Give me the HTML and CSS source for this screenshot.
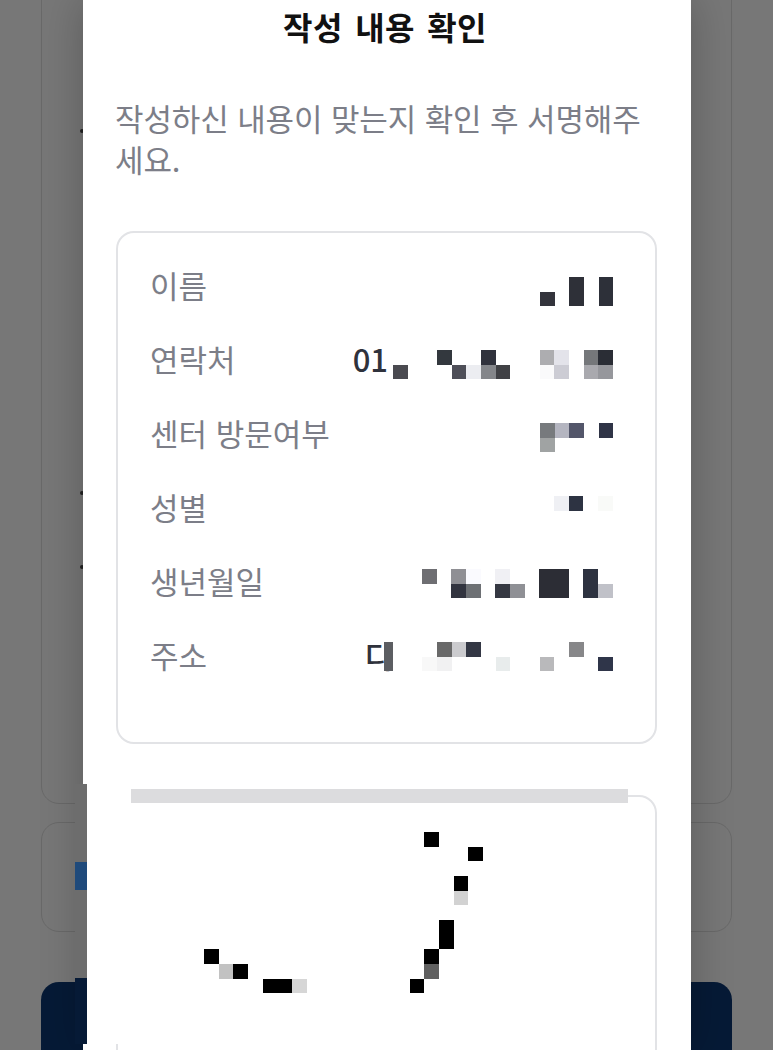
FILE: index.html
```html
<!DOCTYPE html>
<html lang="ko">
<head>
<meta charset="utf-8">
<title>작성 내용 확인</title>
<link rel="stylesheet" href="styles.css">
</head>
<body>
<div class="page">
  <div class="backdrop">
    <div class="bg-card bg-card-form"></div>
    <div class="bg-card bg-card-agree"></div>
    <div class="bg-button"></div>
  </div>
  <i class="bullet bullet-a"></i>
  <i class="bullet bullet-b"></i>
  <i class="bullet bullet-c"></i>

  <section class="modal">
    <h1 class="title">작성 내용 확인</h1>
    <p class="desc">작성하신 내용이 맞는지 확인 후 서명해주세요.</p>
    <div class="info-card">
      <div class="row row-1">
        <span class="label">이름</span>
        <svg class="mosaic" width="73.3" height="29.3" viewBox="0 0 5 2" shape-rendering="crispEdges">
          <rect x="0" y="1" width="1" height="1" fill="#33343c"/>
          <rect x="2" y="0" width="1" height="2" fill="#2e3038"/>
          <rect x="4" y="0" width="1" height="2" fill="#2d3039"/>
        </svg>
      </div>
      <div class="row row-2">
        <span class="label">연락처</span>
        <span class="value-text">01</span>
        <svg class="mosaic" width="220" height="29.3" viewBox="0 0 15 2" shape-rendering="crispEdges">
          <rect x="3" y="0" width="1" height="1" fill="#33383e"/>
          <rect x="6" y="0" width="1" height="1" fill="#30323c"/>
          <rect x="10" y="0" width="1" height="1" fill="#adadb0"/>
          <rect x="11" y="0" width="1" height="1" fill="#e3e3ea"/>
          <rect x="13" y="0" width="1" height="1" fill="#75777a"/>
          <rect x="14" y="0" width="1" height="1" fill="#2a2d35"/>
          <rect x="0" y="1" width="1" height="1" fill="#4a4a50"/>
          <rect x="4" y="1" width="1" height="1" fill="#4e4f58"/>
          <rect x="5" y="1" width="1" height="1" fill="#ecedf1"/>
          <rect x="6" y="1" width="1" height="1" fill="#84868a"/>
          <rect x="7" y="1" width="1" height="1" fill="#404145"/>
          <rect x="10" y="1" width="1" height="1" fill="#fafafb"/>
          <rect x="11" y="1" width="1" height="1" fill="#ccccd4"/>
          <rect x="13" y="1" width="1" height="1" fill="#a9a9ae"/>
          <rect x="14" y="1" width="1" height="1" fill="#96979c"/>
        </svg>
      </div>
      <div class="row row-3">
        <span class="label">센터 방문여부</span>
        <svg class="mosaic" width="73.3" height="29.3" viewBox="0 0 5 2" shape-rendering="crispEdges">
          <rect x="0" y="0" width="1" height="1" fill="#777a7d"/>
          <rect x="1" y="0" width="1" height="1" fill="#b4b5c0"/>
          <rect x="2" y="0" width="1" height="1" fill="#53566a"/>
          <rect x="4" y="0" width="1" height="1" fill="#2f3446"/>
          <rect x="0" y="1" width="1" height="1" fill="#a0a3a3"/>
        </svg>
      </div>
      <div class="row row-4">
        <span class="label">성별</span>
        <svg class="mosaic" width="58.7" height="29.3" viewBox="0 0 4 2" shape-rendering="crispEdges">
          <rect x="0" y="0" width="1" height="1" fill="#eff0f4"/>
          <rect x="1" y="0" width="1" height="1" fill="#2d3342"/>
          <rect x="3" y="0" width="1" height="1" fill="#f9faf8"/>
        </svg>
      </div>
      <div class="row row-5">
        <span class="label">생년월일</span>
        <svg class="mosaic" width="190.7" height="29.3" viewBox="0 0 13 2" shape-rendering="crispEdges">
          <rect x="0" y="0" width="1" height="1" fill="#6e6e72"/>
          <rect x="2" y="0" width="1" height="1" fill="#8f8f94"/>
          <rect x="3" y="0" width="1" height="1" fill="#fafafe"/>
          <rect x="5" y="0" width="1" height="1" fill="#f0f0f4"/>
          <rect x="8" y="0" width="2" height="2" fill="#2c2d35"/>
          <rect x="11" y="0" width="1" height="2" fill="#2d3240"/>
          <rect x="2" y="1" width="1" height="1" fill="#32343f"/>
          <rect x="3" y="1" width="1" height="1" fill="#6d7074"/>
          <rect x="5" y="1" width="1" height="1" fill="#353842"/>
          <rect x="6" y="1" width="1" height="1" fill="#8f9095"/>
          <rect x="12" y="1" width="1" height="1" fill="#c0c1c8"/>
        </svg>
      </div>
      <div class="row row-6">
        <span class="label">주소</span>
        <span class="value-text value-clip">디</span>
        <svg class="mosaic" width="220" height="29.3" viewBox="0 0 15 2" shape-rendering="crispEdges">
          <rect x="3" y="0" width="1" height="1" fill="#696969"/>
          <rect x="4" y="0" width="1" height="1" fill="#cbcbce"/>
          <rect x="5" y="0" width="1" height="1" fill="#333744"/>
          <rect x="12" y="0" width="1" height="1" fill="#878789"/>
          <rect x="2" y="1" width="1" height="1" fill="#f8f8f8"/>
          <rect x="3" y="1" width="1" height="1" fill="#f1f1f2"/>
          <rect x="7" y="1" width="1" height="1" fill="#e8ecec"/>
          <rect x="10" y="1" width="1" height="1" fill="#b9b9bb"/>
          <rect x="14" y="1" width="1" height="1" fill="#2f3549"/>
        </svg>
      </div>
    </div>
    <div class="sign-card"></div>
  </section>

  <div class="patch">
    <div class="patch-strip">
      <div class="strip-blue"></div>
      <div class="strip-navy"></div>
    </div>
    <div class="patch-body">
      <div class="sign-bar"></div>
      <svg class="signature" width="279" height="161.4" viewBox="0 0 19 11" shape-rendering="crispEdges">
        <rect x="15" y="0" width="1" height="1" fill="#000"/>
        <rect x="18" y="1" width="1" height="1" fill="#000"/>
        <rect x="17" y="3" width="1" height="1" fill="#000"/>
        <rect x="17" y="4" width="1" height="1" fill="#d2d2d2"/>
        <rect x="16" y="6" width="1" height="2" fill="#000"/>
        <rect x="15" y="8" width="1" height="1" fill="#000"/>
        <rect x="15" y="9" width="1" height="1" fill="#606060"/>
        <rect x="14" y="10" width="1" height="1" fill="#000"/>
        <rect x="0" y="8" width="1" height="1" fill="#000"/>
        <rect x="1" y="9" width="1" height="1" fill="#c2c2c2"/>
        <rect x="2" y="9" width="1" height="1" fill="#000"/>
        <rect x="4" y="10" width="2" height="1" fill="#000"/>
        <rect x="6" y="10" width="1" height="1" fill="#d6d6d6"/>
      </svg>
    </div>
  </div>
</div>
</body>
</html>
```

FILE: styles.css
```css
* { box-sizing: border-box; }
html, body { margin: 0; padding: 0; }
body {
  background: #777;
  font-family: "Noto Sans CJK KR", "Noto Sans", sans-serif;
  overflow: hidden;
}
.page {
  position: relative;
  width: 773px;
  height: 1050px;
  overflow: hidden;
}
.backdrop {
  display: flex;
  flex-direction: column;
  width: 691px;
  margin-left: 41px;
}
.bg-card {
  border: 1px solid #696969;
  border-radius: 18px;
}
.bg-card-form {
  height: 844px;
  margin-top: -40px;
}
.bg-card-agree {
  height: 110px;
  margin-top: 18px;
}
.bg-button {
  height: 90px;
  margin-top: 50px;
  background: #061a36;
  border-radius: 18px 18px 0 0;
}
.bullet {
  position: absolute;
  left: 80px;
  width: 4px;
  height: 4px;
  border-radius: 50%;
  background: #222;
}
.bullet-a { top: 129px; }
.bullet-b { top: 491px; }
.bullet-c { top: 565px; }

.modal {
  position: absolute;
  left: 83px;
  top: 0;
  width: 608px;
  height: 1050px;
  background: #fff;
  padding: 0 34px 0 33px;
  box-shadow: 0 0 40px rgba(0, 0, 0, 0.24);
}
.title {
  margin: 0;
  padding: 4px 3px 0 0;
  height: 97px;
  text-align: center;
  font-size: 32px;
  line-height: 44px;
  font-weight: 700;
  color: #111;
  word-spacing: 3px;
  letter-spacing: 0.4px;
}
.desc {
  margin: 0 0 0 -1px;
  font-size: 31px;
  line-height: 41px;
  letter-spacing: -0.12px;
  color: #7c7e88;
  height: 134px;
  word-break: break-all;
}
.info-card {
  width: 541px;
  height: 513px;
  border: 2px solid #e2e3e6;
  border-radius: 18px;
  padding: 15px 42px 0 32px;
}
.row {
  display: flex;
  align-items: center;
  height: 74px;
}
.label {
  font-size: 31px;
  line-height: 40px;
  color: #7c7e88;
  white-space: nowrap;
  margin-right: auto;
}
.value-text {
  font-size: 31px;
  line-height: 40px;
  font-weight: 500;
  color: #2f323c;
  margin-right: 5px;
}
.value-clip {
  position: relative;
  margin-right: 0;
}
.value-clip::after {
  content: "";
  position: absolute;
  right: 0;
  top: 7px;
  width: 9px;
  height: 29px;
  background: #5c5e62;
}
.mosaic {
  display: block;
  flex: none;
}
.row-1 .mosaic { margin-top: 12.6px; }
.row-2 .mosaic { margin-top: 11.2px; }
.row-3 .mosaic { margin-top: 10px; }
.row-4 .mosaic { margin-top: 6.8px; }
.row-5 .mosaic { margin-top: 5.2px; }
.row-6 .mosaic { margin-top: 2.8px; }
.sign-card {
  width: 541px;
  height: 400px;
  margin-top: 51px;
  border: 2px solid #e2e3e6;
  border-radius: 18px;
}

.patch {
  position: absolute;
  left: 75px;
  top: 784px;
  width: 553px;
  height: 260px;
  display: flex;
}
.patch-strip {
  width: 12px;
  background: #6d6d6d;
  display: flex;
  flex-direction: column;
}
.strip-blue {
  height: 28px;
  margin-top: 78px;
  background: #1f4a7b;
}
.strip-navy {
  height: 66px;
  margin-top: 88px;
  background: #061a36;
}
.patch-body {
  flex: 1;
  background: #fff;
  padding: 5px 0 0 44px;
}
.sign-bar {
  height: 14px;
  background: #dcdcde;
}
.signature {
  display: block;
  margin: 29px 0 0 73px;
}
```
